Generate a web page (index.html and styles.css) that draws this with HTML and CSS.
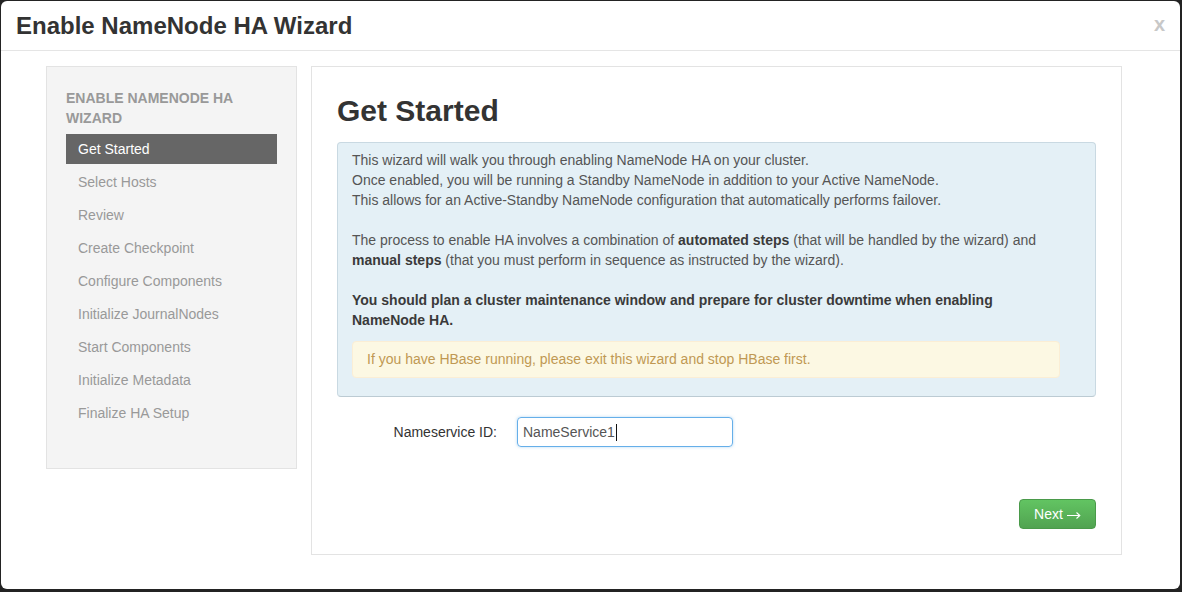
FILE: index.html
```html
<!DOCTYPE html>
<html>
<head>
<meta charset="utf-8">
<title>Enable NameNode HA Wizard</title>
<link rel="stylesheet" href="styles.css">
</head>
<body>
<div class="modal">
  <div class="modal-header">
    <h3 class="modal-title">Enable NameNode HA Wizard</h3>
    <span class="close">x</span>
  </div>
  <div class="modal-body">
    <div class="sidebar">
      <div class="nav-header">Enable NameNode HA Wizard</div>
      <ul class="nav-list">
        <li class="nav-item active">Get Started</li>
        <li class="nav-item">Select Hosts</li>
        <li class="nav-item">Review</li>
        <li class="nav-item">Create Checkpoint</li>
        <li class="nav-item">Configure Components</li>
        <li class="nav-item">Initialize JournalNodes</li>
        <li class="nav-item">Start Components</li>
        <li class="nav-item">Initialize Metadata</li>
        <li class="nav-item">Finalize HA Setup</li>
      </ul>
    </div>
    <div class="main">
      <h2 class="page-title">Get Started</h2>
      <div class="info-box">
        <p class="para">This wizard will walk you through enabling NameNode HA on your cluster.<br>Once enabled, you will be running a Standby NameNode in addition to your Active NameNode.<br>This allows for an Active-Standby NameNode configuration that automatically performs failover.</p>
        <p class="para">The process to enable HA involves a combination of <b>automated steps</b> (that will be handled by the wizard) and <b>manual steps</b> (that you must perform in sequence as instructed by the wizard).</p>
        <p class="para para-strong"><b>You should plan a cluster maintenance window and prepare for cluster downtime when enabling NameNode HA.</b></p>
        <div class="alert-warning">If you have HBase running, please exit this wizard and stop HBase first.</div>
      </div>
      <div class="form-row">
        <label class="control-label">Nameservice ID:</label>
        <div class="input"><span class="input-text">NameService1</span><span class="caret"></span></div>
      </div>
      <div class="actions">
        <button class="btn-next">Next <svg class="arrow" width="14" height="8" viewBox="0 0 14 8"><path d="M0 4.5H12.5M9.5 1.5L12.8 4.5L9.5 7.5" fill="none" stroke="#fff" stroke-width="1.1"/></svg></button>
      </div>
    </div>
  </div>
</div>
</body>
</html>
```

FILE: styles.css
```css
* { box-sizing: border-box; }
html, body { margin: 0; padding: 0; }
body {
  background: #232323;
  padding: 1px 2px 3px 1px;
  font-family: "Liberation Sans", Arial, sans-serif;
  font-size: 14px;
  color: #333;
  height: 592px;
  overflow: hidden;
}
.modal {
  background: #fff;
  border-radius: 6px;
  height: 588px;
  width: 1179px;
}
.modal-header {
  display: flex;
  justify-content: space-between;
  align-items: center;
  height: 50px;
  padding: 0 15px 0 15px;
  border-bottom: 1px solid #e5e5e5;
}
.modal-title {
  margin: 0;
  font-size: 24px;
  line-height: 30px;
  font-weight: bold;
  color: #333;
}
.close {
  font-size: 20px;
  font-weight: bold;
  color: #c8c8c8;
  line-height: 20px;
  margin-top: -4px;
}
.modal-body {
  display: flex;
  align-items: flex-start;
  gap: 14px;
  padding: 15px 58px 0 45px;
}
.sidebar {
  width: 251px;
  flex: none;
  background: #f4f4f4;
  border: 1px solid #e3e3e3;
  padding: 21px 19px 37px 19px;
}
.nav-header {
  text-transform: uppercase;
  font-weight: bold;
  font-size: 14px;
  line-height: 20px;
  color: #999;
  margin-bottom: 6px;
}
.nav-list {
  list-style: none;
  margin: 0;
  padding: 0;
}
.nav-item {
  height: 30px;
  line-height: 30px;
  padding-left: 12px;
  margin-bottom: 3px;
  color: #999;
  font-size: 14px;
}
.nav-item.active {
  background: #666;
  color: #fff;
}
.main {
  flex: 1;
  border: 1px solid #e3e3e3;
  padding: 24px 25px 25px 25px;
}
.page-title {
  margin: 0 0 11px 0;
  font-size: 30px;
  line-height: 40px;
  font-weight: bold;
  color: #333;
}
.info-box {
  background: #e4f0f6;
  border: 1px solid #c9d9e2;
  border-bottom-color: #bccbd3;
  border-radius: 4px;
  padding: 7px 14px 7px 14px;
  color: #555;
  line-height: 20px;
}
.para { margin: 0 0 20px 0; }
.para b { color: #3a3a3a; }
.para-strong { margin-bottom: 11px; max-width: 655px; }
.alert-warning {
  background: #fcf8e3;
  border: 1px solid #fbeed5;
  border-radius: 4px;
  color: #c09853;
  padding: 8px 14px;
  line-height: 19px;
  margin: 0 21px 11px 0;
}
.form-row {
  display: flex;
  align-items: center;
  margin-top: 20px;
}
.control-label {
  width: 160px;
  text-align: right;
  margin-right: 20px;
  color: #333;
}
.input {
  width: 216px;
  height: 30px;
  border: 1px solid #66afe9;
  border-radius: 4px;
  box-shadow: 0 0 3px rgba(102, 175, 233, 0.5);
  padding: 0 5px;
  display: flex;
  align-items: center;
  color: #555;
}
.caret {
  display: inline-block;
  width: 1px;
  height: 17px;
  background: #111;
  margin-left: 1px;
}
.actions {
  display: flex;
  justify-content: flex-end;
  margin-top: 52px;
}
.btn-next {
  width: 77px;
  height: 30px;
  border: 1px solid #4a9a4a;
  border-radius: 4px;
  background: linear-gradient(#62c462, #51a351);
  color: #fff;
  font-family: "Liberation Sans", Arial, sans-serif;
  font-size: 14px;
  padding: 0;
  display: flex;
  align-items: center;
  justify-content: center;
  gap: 4px;
}
.arrow { display: block; margin-top: 1px; }
```
